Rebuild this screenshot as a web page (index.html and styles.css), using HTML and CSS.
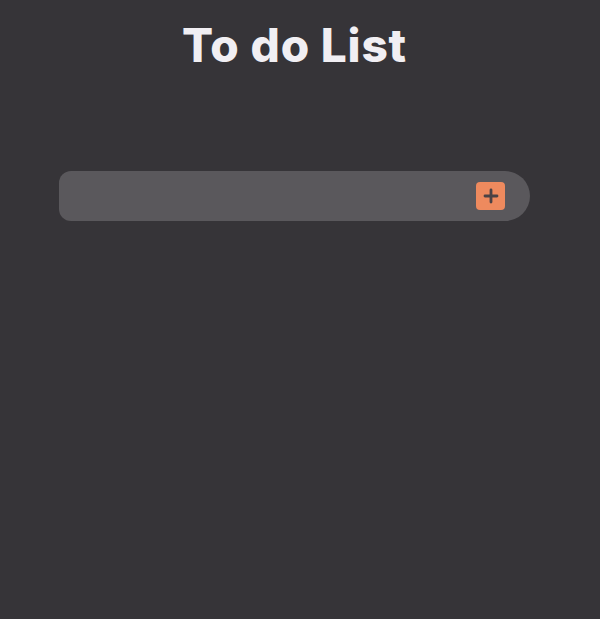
FILE: index.html
```html
<!DOCTYPE html>
<html lang="en">
<head>
<meta charset="utf-8">
<title>To do List</title>
<link rel="stylesheet" href="styles.css">
</head>
<body>
<main class="app">
  <h1 class="title">To do List</h1>
  <form class="todo-form">
    <input class="todo-input" type="text" aria-label="New task">
    <button class="add-btn" type="button" aria-label="Add task">
      <svg viewBox="0 0 28 28" width="28" height="28" aria-hidden="true">
        <path d="M14 8v12M8 14h12" stroke="#4a4245" stroke-width="2.8" stroke-linecap="round" fill="none"/>
      </svg>
    </button>
  </form>
</main>
</body>
</html>
```
FILE: styles.css
```css
html, body {
  margin: 0;
  padding: 0;
  background: #363438;
  height: 100%;
}
body {
  font-family: Inter, "Noto Sans", sans-serif;
}
.app {
  width: 589px;
  display: flex;
  flex-direction: column;
  align-items: center;
}
.title {
  margin: 17px 0 0;
  color: #f1eff3;
  font-size: 46px;
  font-weight: 800;
  line-height: 56px;
  letter-spacing: 0.8px;
}
.todo-form {
  margin-top: 98px;
  width: 471px;
  height: 50px;
  box-sizing: border-box;
  background: #5a585c;
  border-radius: 12px 25px 25px 12px;
  display: flex;
  align-items: center;
  padding: 0 25px 0 16px;
}
.todo-input {
  flex: 1;
  min-width: 0;
  background: transparent;
  border: none;
  outline: none;
  color: #f1eff3;
  font: 16px Inter, sans-serif;
}
.add-btn {
  width: 29px;
  height: 28px;
  padding: 0;
  border: none;
  border-radius: 4px;
  background: #ee8a5e;
  display: flex;
  align-items: center;
  justify-content: center;
  cursor: pointer;
}
```
